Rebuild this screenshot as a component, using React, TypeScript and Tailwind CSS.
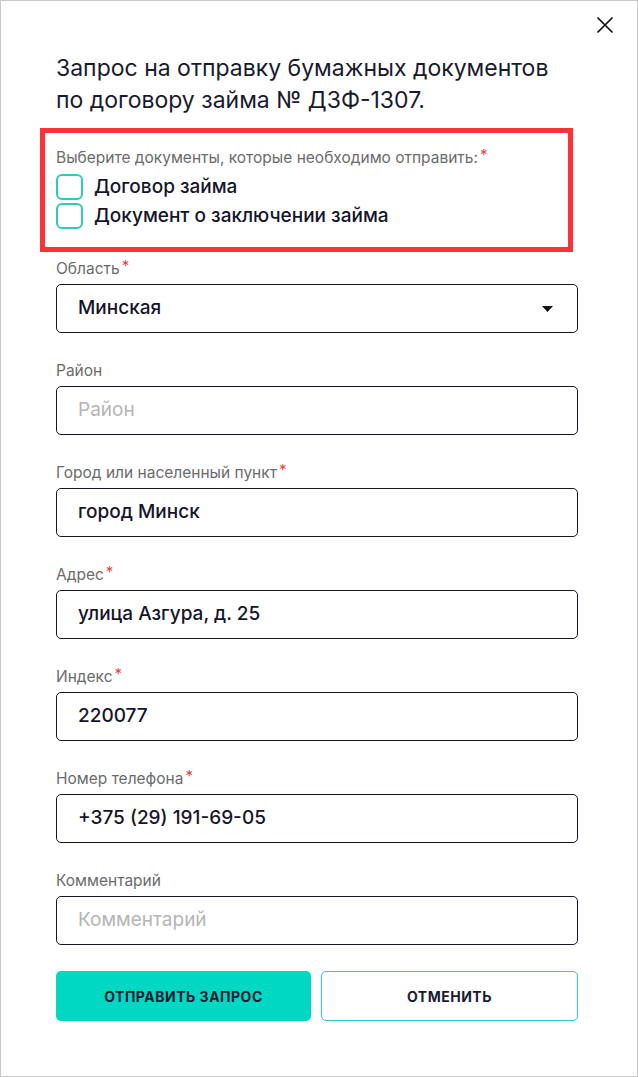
import React from "react";

type Field = {
  label: string;
  required?: boolean;
  value?: string;
  placeholder?: string;
  select?: boolean;
};

const fields: Field[] = [
  { label: "Область", required: true, value: "Минская", select: true },
  { label: "Район", placeholder: "Район" },
  { label: "Город или населенный пункт", required: true, value: "город Минск" },
  { label: "Адрес", required: true, value: "улица Азгура, д. 25" },
  { label: "Индекс", required: true, value: "220077" },
  { label: "Номер телефона", required: true, value: "+375 (29) 191-69-05" },
  { label: "Комментарий", placeholder: "Комментарий" },
];

const docs = ["Договор займа", "Документ о заключении займа"];

const Star = () => <span className="ml-[2px] text-[#e8413c] align-top text-[15px] leading-[14px]">*</span>;

const FormField = ({ field }: { field: Field }) => {
  return (
    <div className="mb-[28px]">
      <div className="h-[20px] text-[15.5px] leading-[20px] text-[#6b6b6b]">
        {field.label}
        {field.required && <Star />}
      </div>
      <div className="mt-[5px] h-[49px] w-[522px] rounded-[5px] border border-[#16162a] flex items-center pl-[21px] pr-[24px]">
        <span
          className={
            "flex-1 text-[19px] " +
            (field.value ? "text-[#15152a] font-medium" : "text-[#b5b5b5]")
          }
        >
          {field.value ?? field.placeholder}
        </span>
        {field.select && (
          <svg width="11" height="6" viewBox="0 0 11 6">
            <path d="M0 0 L11 0 L5.5 6 Z" fill="#111" />
          </svg>
        )}
      </div>
    </div>
  );
};

export default function App() {
  return (
    <div
      className="relative w-[638px] h-[1077px] bg-white border border-[#c9c9c9] pl-[55px] pt-[51px]"
      style={{ fontFamily: "Inter, 'Noto Sans', sans-serif" }}
    >
      <button className="absolute right-[23px] top-[15px] w-[18px] h-[18px]">
        <svg width="18" height="18" viewBox="0 0 18 18">
          <path d="M1.5 1.5 L16.5 16.5 M16.5 1.5 L1.5 16.5" stroke="#111" strokeWidth="1.7" />
        </svg>
      </button>

      <h1 className="text-[23px] leading-[32px] text-[#1a1a2e] font-normal">
        Запрос на отправку бумажных документов
        <br />
        по договору займа № ДЗФ-1307.
      </h1>

      <div className="ml-[-16px] mt-[12px] w-[533px] border-[5px] border-[#fb3237] pl-[11px] pt-[15px] pb-[18px]">
        <div className="h-[20px] text-[15.5px] leading-[20px] text-[#6b6b6b]">
          Выберите документы, которые необходимо отправить:
          <Star />
        </div>
        <div className="flex flex-col gap-[3px] mt-[6px]">
          {docs.map((d, i) => (
            <label key={i} className="flex items-center gap-[11px] h-[26px]">
              <span className="w-[27px] h-[26px] rounded-[6px] border-2 border-[#2dcbb8]" />
              <span className="text-[19px] font-medium text-[#15152a]">{d}</span>
            </label>
          ))}
        </div>
      </div>

      <div className="mt-[7px]">
        {fields.map((f, i) => (
          <FormField key={i} field={f} />
        ))}
      </div>

      <div className="flex gap-[10px] mt-[-2px] w-[522px]">
        <button className="flex-1 h-[50px] rounded-[5px] bg-[#00d8c4] text-[14px] font-bold text-[#1a1a2e] tracking-[0.5px]">
          ОТПРАВИТЬ ЗАПРОС
        </button>
        <button className="flex-1 h-[50px] rounded-[5px] border border-[#2dcbd0] bg-white text-[14px] font-bold text-[#1a1a2e] tracking-[0.5px]">
          ОТМЕНИТЬ
        </button>
      </div>
    </div>
  );
}
